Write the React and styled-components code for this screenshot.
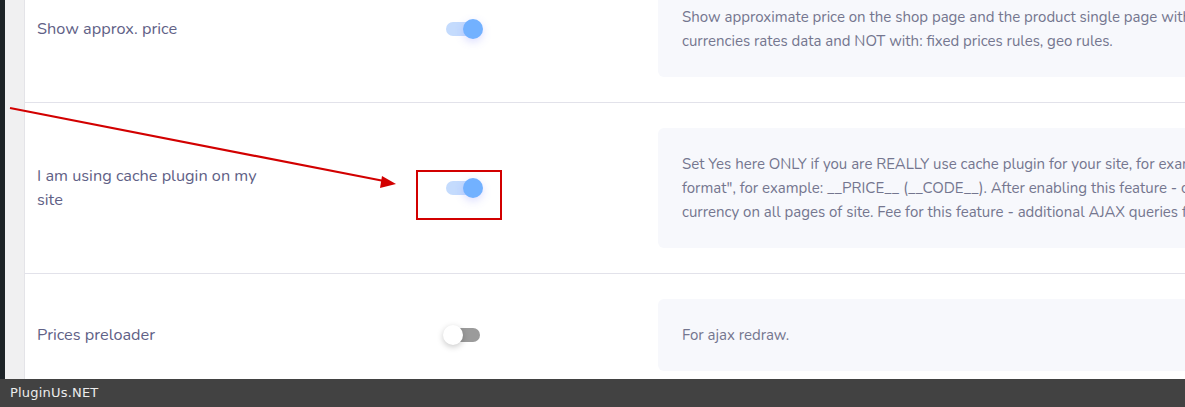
import React from 'react';
import styled, { createGlobalStyle } from 'styled-components';

const GlobalStyle = createGlobalStyle`
  html, body {
    margin: 0;
    padding: 0;
    overflow: hidden;
    background: #ffffff;
  }
`;

const settings = [
  {
    id: 'approx',
    label: 'Show approx. price',
    on: true,
    lines: [
      'Show approximate price on the shop page and the product single page with currency selected by visitor. Works only with',
      'currencies rates data and NOT with: fixed prices rules, geo rules.',
    ],
  },
  {
    id: 'cache',
    label: 'I am using cache plugin on my site',
    on: true,
    lines: [
      'Set Yes here ONLY if you are REALLY use cache plugin for your site, for example like Super cache or Hiper cache (!!) + set "Custom price',
      'format", for example: __PRICE__ (__CODE__). After enabling this feature - clean your cache to make it works. It will allow to show prices in selected',
      'currency on all pages of site. Fee for this feature - additional AJAX queries for prices redraw.',
    ],
  },
  {
    id: 'preloader',
    label: 'Prices preloader',
    on: false,
    lines: ['For ajax redraw.'],
  },
];

const App = () => {
  return (
    <>
      <GlobalStyle />
      <StScreen>
        <StWorkArea>
          <StAdminBar />
          <StGutter />
          <StMain>
            <StList>
              {settings.map((item) => (
                <StRow key={item.id}>
                  <StLabel>{item.label}</StLabel>
                  <StToggleCell>
                    <StSwitch>
                      <StTrack $on={item.on} />
                      <StKnob $on={item.on} />
                    </StSwitch>
                  </StToggleCell>
                  <StDescBox>
                    {item.lines.map((line, i) => (
                      <StDescLine key={i}>{line}</StDescLine>
                    ))}
                  </StDescBox>
                </StRow>
              ))}
            </StList>
          </StMain>
          {/* red annotation drawn over the screenshot */}
          <StAnnotation width="1185" height="379" viewBox="0 0 1185 379">
            <line x1="10" y1="108" x2="384" y2="181" stroke="#d20000" strokeWidth="2.2" />
            <polygon points="396,184 382,176 380,188" fill="#d20000" />
            <rect x="417" y="171" width="84" height="48" fill="none" stroke="#d20000" strokeWidth="2" />
          </StAnnotation>
        </StWorkArea>
        <StFooter>PluginUs.NET</StFooter>
      </StScreen>
    </>
  );
};

export default App;

const StScreen = styled.div`
  width: 1185px;
  height: 407px;
  display: flex;
  flex-direction: column;
  overflow: hidden;
`;

const StWorkArea = styled.div`
  position: relative;
  flex: 1;
  display: flex;
  flex-direction: row;
  overflow: hidden;
`;

const StAdminBar = styled.div`
  width: 5px;
  background: #1d2327;
  flex-shrink: 0;
`;

const StGutter = styled.div`
  width: 19px;
  background: #f0f0f1;
  border-right: 1px solid #e4e4e8;
  flex-shrink: 0;
`;

const StMain = styled.div`
  flex: 1;
  background: #ffffff;
  overflow: hidden;
`;

const StList = styled.div`
  margin-top: -44px;
  display: flex;
  flex-direction: column;
`;

const StRow = styled.div`
  display: grid;
  grid-template-columns: 406px 215px 780px;
  align-items: center;
  padding: 25px 0 25px 12px;
  border-bottom: 1px solid #e2e2ea;
`;

const StLabel = styled.div`
  width: 236px;
  font-family: 'Nunito', Lato, 'Open Sans', sans-serif;
  font-size: 16.3px;
  line-height: 24px;
  color: #5f6186;
`;

const StToggleCell = styled.div`
  display: flex;
  align-items: center;
`;

const StSwitch = styled.div`
  position: relative;
  width: 40px;
  height: 20px;
`;

const StTrack = styled.div`
  position: absolute;
  left: 3px;
  top: 3px;
  width: 34px;
  height: 14px;
  border-radius: 7px;
  background: ${({ $on }) => ($on ? '#c4dbfd' : '#9b9b9b')};
`;

const StKnob = styled.div`
  position: absolute;
  top: 0;
  left: ${({ $on }) => ($on ? '20px' : '0')};
  width: 20px;
  height: 20px;
  border-radius: 50%;
  background: ${({ $on }) => ($on ? '#72b1ff' : '#ffffff')};
  box-shadow: ${({ $on }) =>
    $on ? '0 3px 8px rgba(110, 120, 255, 0.25)' : '0 2px 6px rgba(0, 0, 0, 0.22)'};
`;

const StDescBox = styled.div`
  background: #f7f8fc;
  border-radius: 6px;
  padding: 24px;
  font-family: 'Nunito', Lato, 'Open Sans', sans-serif;
  font-size: 15px;
  line-height: 24px;
  color: #74768f;
`;

const StDescLine = styled.div`
  white-space: nowrap;
`;

const StAnnotation = styled.svg`
  position: absolute;
  left: 0;
  top: 0;
  pointer-events: none;
`;

const StFooter = styled.div`
  height: 28px;
  flex-shrink: 0;
  background: #424242;
  color: #ececec;
  font-family: 'DejaVu Sans', sans-serif;
  font-size: 13px;
  line-height: 28px;
  padding-left: 10px;
  letter-spacing: 0.2px;
`;
